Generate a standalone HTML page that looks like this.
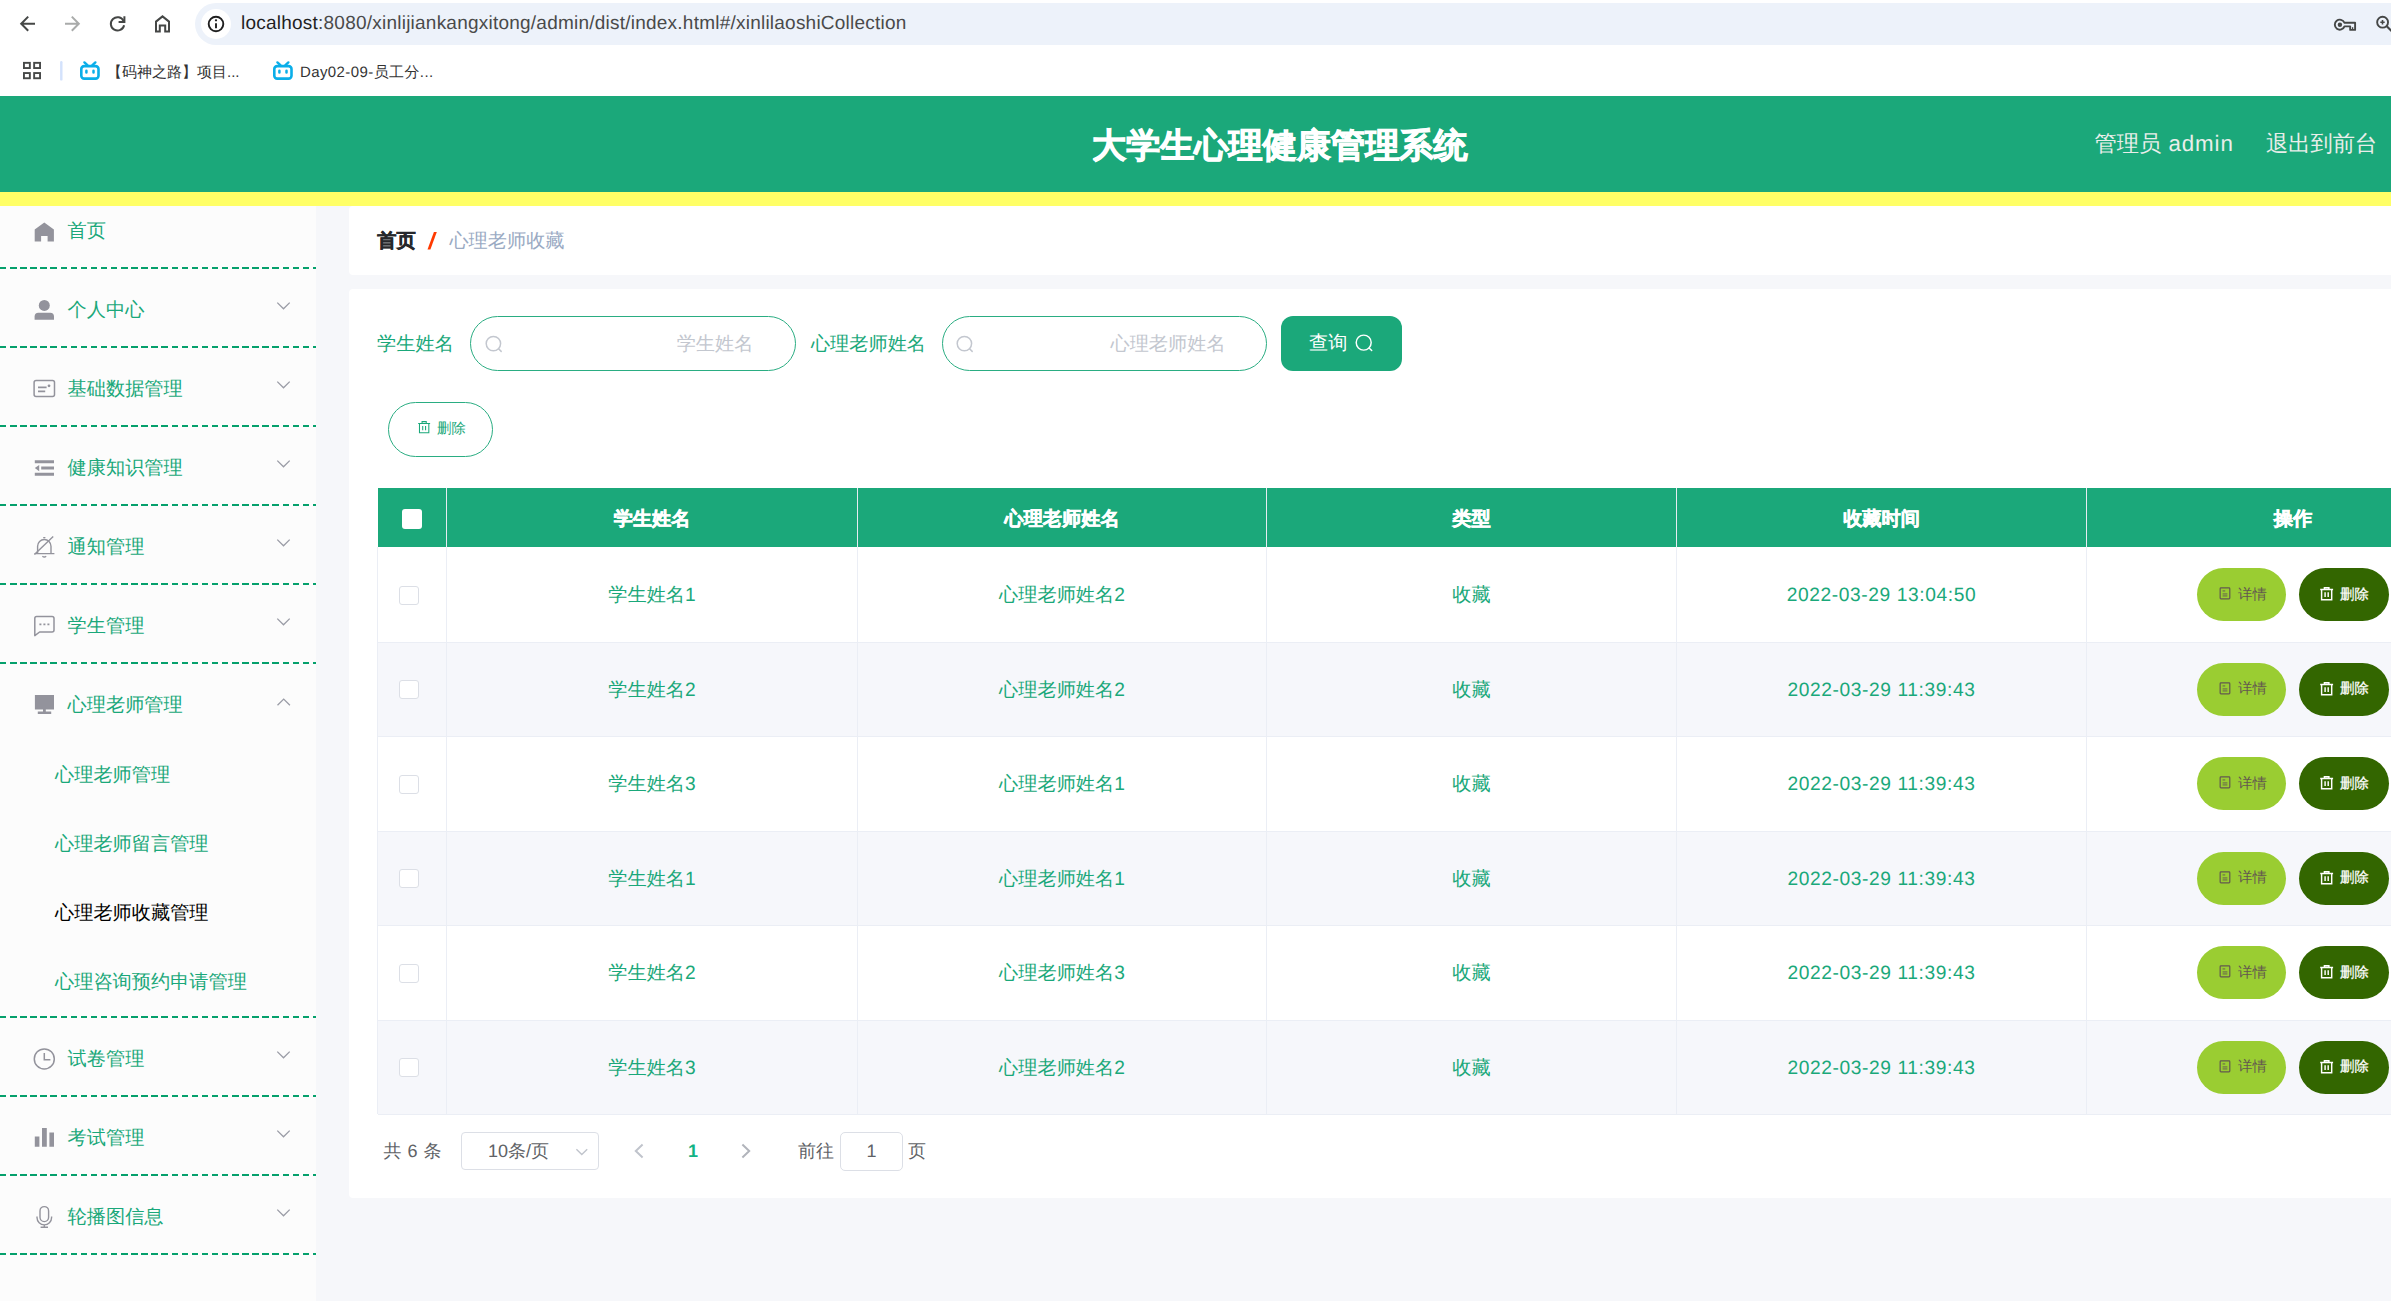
<!DOCTYPE html>
<html lang="zh">
<head>
<meta charset="utf-8">
<title>xinlilaoshiCollection</title>
<style>
*{box-sizing:border-box;margin:0;padding:0}
html,body{width:2391px;height:1301px;overflow:hidden;background:#fff}
body{font-family:"Liberation Sans",sans-serif;position:relative;color:#333;text-rendering:geometricPrecision}
.abs{position:absolute}
.t{position:absolute;white-space:nowrap;line-height:1}
svg{position:absolute;overflow:visible}
#urlbar{left:195px;top:3px;width:2300px;height:42px;border-radius:21px;background:#edf2fa}
#infoc{left:201px;top:9px;width:30px;height:30px;border-radius:15px;background:#fff}
#url{left:241px;top:14px;font-size:19px;color:#4a4a4a;letter-spacing:0.23px}#url b{font-weight:normal;color:#1f1f1f}
.bm{font-size:15px;color:#333;top:65px}
#hdr{left:0;top:96px;width:2391px;height:96px;background:#1ba87a}
#ylw{left:0;top:192px;width:2391px;height:14px;background:#ffff66}
#title{left:1279.8px;transform:translateX(-50%);top:129px;font-size:34.15px;font-weight:bold;color:#fff;-webkit-text-stroke:0.9px #fff}
.hr{font-size:22.3px;color:#e9eeea;top:133px}
#main{left:316px;top:206px;width:2075px;height:1095px;background:#f6f7fa}
#side{left:0;top:206px;width:316px;height:1095px;background:#fcfcfc}
.dash{left:0;width:316px;height:2px;overflow:hidden}.dash i{position:absolute;left:-0.4px;top:0;width:330px;height:2px;background:repeating-linear-gradient(90deg,#05a06c 0,#05a06c 6.5px,transparent 6.5px,transparent 10.09px)}
.mi{font-size:19.2px;color:#1aa87a;left:67.6px}
.si{font-size:19.2px;color:#1aa87a;left:55px}
#bc{left:349px;top:206px;width:2100px;height:69px;background:#fff;border-radius:4px}
#card{left:349px;top:289px;width:2100px;height:909px;background:#fff;border-radius:4px}
.lbl{font-size:19.2px;color:#1aa87a;top:335px}
.inp{top:316px;width:326px;height:55px;border:1.3px solid #2aad82;border-radius:28px;background:#fff}
.ph{font-size:19.2px;color:#c3c7cf;top:334.6px}
#thead{left:378px;top:488px;width:2100px;height:59px;background:#1ba87a}
.th{font-size:19.2px;font-weight:bold;color:#fff;-webkit-text-stroke:0.5px #fff;top:510px;transform:translateX(-50%)}
.vl{top:547px;width:1px;height:568px;background:#ebeef5}
.vh{top:488px;width:1px;height:59px;background:#e6ebf2}
.row{left:378px;width:2100px;border-bottom:1px solid #ebeef5}
.row.s{background:#f6f7fb}
.td{font-size:19.2px;color:#1aa87a;transform:translateX(-50%)}
.cb{left:399.4px;width:19.6px;height:19px;border:1px solid #dcdfe6;border-radius:3px;background:#fff}
.b1{left:2197px;width:89.4px;height:53.4px;border-radius:27px;background:#9acd32}
.b2{left:2298.7px;width:90.6px;height:53.4px;border-radius:27px;background:#336600}
.b1t{font-size:14.4px;color:#63584f;left:2238px}
.b2t{font-size:14.4px;color:#fff;left:2340px;-webkit-text-stroke:0.25px #fff}
.pg{font-size:18px;color:#606266;top:1142px}
</style>
</head>
<body>

<div class="abs" id="urlbar"></div>
<div class="abs" id="infoc"></div>
<div class="t" id="url"><b>localhost</b>:8080/xinlijiankangxitong/admin/dist/index.html#/xinlilaoshiCollection</div>
<!-- nav icons -->
<svg style="left:0;top:0" width="260" height="50" viewBox="0 0 260 50" fill="none" stroke-linecap="butt" stroke-linejoin="miter">
 <path d="M35 23.7 H22 M28.2 16.6 L21.2 23.7 L28.2 30.8" stroke="#454746" stroke-width="2"/>
 <path d="M65 23.7 H78 M71.8 16.6 L78.8 23.7 L71.8 30.8" stroke="#a9abaa" stroke-width="2"/>
 <path d="M123.6 21.0 A6.7 6.7 0 1 0 124.1 25.2" stroke="#454746" stroke-width="2"/>
 <path d="M124.4 16.2 V22 H118.6" stroke="#454746" stroke-width="2"/>
 <path d="M156 31.4 V21.6 L162.5 16.4 L169 21.6 V31.4 H165.2 V25.4 H159.8 V31.4 Z" stroke="#454746" stroke-width="2"/>
 <circle cx="216" cy="24" r="7.3" stroke="#1f1f1f" stroke-width="1.9"/>
 <path d="M216 23.2 V28.2" stroke="#1f1f1f" stroke-width="1.9"/>
 <circle cx="216" cy="20.3" r="1.15" fill="#1f1f1f"/>
</svg>
<!-- key + zoom -->
<svg style="left:2330px;top:10px" width="61" height="30" viewBox="0 0 61 30" fill="none" stroke="#454746" stroke-width="1.9" stroke-linejoin="round">
 <path d="M14.4 12.7 A5 5 0 1 0 14.5 16.4 H20.2 V19.9 H25.1 V12.7 Z"/>
 <circle cx="9.9" cy="14.7" r="2.2" fill="#454746" stroke="none"/>
 <path d="M22.6 17.2 V20" stroke-width="1.3"/>
 <circle cx="52.6" cy="12.2" r="5.45"/>
 <path d="M52.5 9.9 V14.6 M50.3 12.2 H54.7" stroke-width="1.6"/>
 <path d="M56.5 16.1 L62 21.6" stroke-width="2.1"/>
</svg>
<!-- bookmarks bar -->
<svg style="left:20px;top:58px" width="50" height="26" viewBox="0 0 50 26" fill="none">
 <g stroke="#474948" stroke-width="1.9"><rect x="3.95" y="4.85" width="5.9" height="5.2"/><rect x="14.15" y="4.85" width="5.9" height="5.2"/><rect x="3.95" y="15.05" width="5.9" height="5.2"/><rect x="14.15" y="15.05" width="5.9" height="5.2"/></g>
 <path d="M41.3 4.2 V21.4" stroke="#d3e2fc" stroke-width="2.4" stroke-linecap="round"/>
</svg>
<svg style="left:79px;top:60px" width="22" height="22" viewBox="0 0 22 22" fill="none" stroke="#0aaee9" stroke-width="2.6" stroke-linecap="round" stroke-linejoin="round"><rect x="2.3" y="6.1" width="17.2" height="12.5" rx="2.9"/><path d="M5.4 2.4 L8.4 5.2 M16.4 2.4 L13.4 5.2" stroke-width="2.4"/><path d="M7.4 10.8 V12.4 M14.5 10.8 V12.4" stroke-width="2.5"/></svg>
<div class="t bm" style="left:107px">【码神之路】项目...</div>
<svg style="left:272px;top:60px" width="22" height="22" viewBox="0 0 22 22" fill="none" stroke="#0aaee9" stroke-width="2.6" stroke-linecap="round" stroke-linejoin="round"><rect x="2.3" y="6.1" width="17.2" height="12.5" rx="2.9"/><path d="M5.4 2.4 L8.4 5.2 M16.4 2.4 L13.4 5.2" stroke-width="2.4"/><path d="M7.4 10.8 V12.4 M14.5 10.8 V12.4" stroke-width="2.5"/></svg>
<div class="t bm" style="left:300px;letter-spacing:0.4px">Day02-09-员工分...</div>

<div class="abs" id="hdr"></div>
<div class="abs" id="ylw"></div>
<div class="t" id="title">大学生心理健康管理系统</div>
<div class="t hr" style="right:157.3px">管理员&nbsp;<span style="letter-spacing:0.9px;margin-left:1px">admin</span></div>
<div class="t hr" style="right:13.6px">退出到前台</div>
<div class="abs" id="main"></div>
<div class="abs" id="side"></div>
<div class="abs dash" style="top:267px"><i></i></div>
<div class="abs dash" style="top:346px"><i></i></div>
<div class="abs dash" style="top:425px"><i></i></div>
<div class="abs dash" style="top:504px"><i></i></div>
<div class="abs dash" style="top:583px"><i></i></div>
<div class="abs dash" style="top:662px"><i></i></div>
<div class="abs dash" style="top:1016px"><i></i></div>
<div class="abs dash" style="top:1095px"><i></i></div>
<div class="abs dash" style="top:1174px"><i></i></div>
<div class="abs dash" style="top:1253px"><i></i></div>
<svg style="left:32px;top:219px" width="24" height="24" viewBox="0 0 24 24" fill="none"><path d="M12.3 3.4 L21.9 10.4 V22.6 H15.6 V17 H9.1 V22.6 H2.7 V10.4 Z" fill="#93939c"/></svg>
<div class="t mi" style="top:222.2px">首页</div>
<svg style="left:32px;top:298px" width="24" height="24" viewBox="0 0 24 24" fill="none"><circle cx="12.3" cy="7.4" r="5.5" fill="#93939c"/><path d="M2.6 21.8 V18.6 Q2.6 14.8 6.4 14.8 H18.2 Q22 14.8 22 18.6 V21.8 Z" fill="#93939c"/></svg>
<div class="t mi" style="top:301.2px">个人中心</div>
<svg style="left:276px;top:301.4px" width="16" height="10" viewBox="0 0 16 10" fill="none"><path d="M1.3 1.6 L7.5 7.8 L13.7 1.6" stroke="#9a9ca6" stroke-width="1.3"/></svg>
<svg style="left:32px;top:377px" width="24" height="24" viewBox="0 0 24 24" fill="none"><rect x="2.1" y="3.4" width="20.4" height="16.2" rx="2" stroke="#93939c" stroke-width="1.5"/><path d="M6 10.4 H14.6 M6 14.4 H13.2" stroke="#93939c" stroke-width="1.6"/><circle cx="17" cy="8.8" r="1.4" fill="#93939c"/></svg>
<div class="t mi" style="top:380.2px">基础数据管理</div>
<svg style="left:276px;top:380.4px" width="16" height="10" viewBox="0 0 16 10" fill="none"><path d="M1.3 1.6 L7.5 7.8 L13.7 1.6" stroke="#9a9ca6" stroke-width="1.3"/></svg>
<svg style="left:32px;top:456px" width="24" height="24" viewBox="0 0 24 24" fill="none"><path d="M2.8 4.2 H22 V7.2 H2.8 Z M9.2 10.6 H22 V13.6 H9.2 Z M2.8 16.8 H22 V19.8 H2.8 Z M7.2 9 V15.2 L2.8 12.1 Z" fill="#93939c"/></svg>
<div class="t mi" style="top:459.2px">健康知识管理</div>
<svg style="left:276px;top:459.4px" width="16" height="10" viewBox="0 0 16 10" fill="none"><path d="M1.3 1.6 L7.5 7.8 L13.7 1.6" stroke="#9a9ca6" stroke-width="1.3"/></svg>
<svg style="left:32px;top:535px" width="24" height="24" viewBox="0 0 24 24" fill="none"><path d="M5.6 18.6 V11.2 A6.7 6.7 0 0 1 19 11.2 V18.6 M2.6 18.6 H22.4 M10.4 21.2 Q12.3 22.8 14.2 21.2 M11.2 2.6 H13.4" stroke="#93939c" stroke-width="1.4"/><path d="M2.4 19.6 L21.2 1.6" stroke="#93939c" stroke-width="1.4"/></svg>
<div class="t mi" style="top:538.2px">通知管理</div>
<svg style="left:276px;top:538.4px" width="16" height="10" viewBox="0 0 16 10" fill="none"><path d="M1.3 1.6 L7.5 7.8 L13.7 1.6" stroke="#9a9ca6" stroke-width="1.3"/></svg>
<svg style="left:32px;top:614px" width="24" height="24" viewBox="0 0 24 24" fill="none"><path d="M4.6 2.6 H20 Q22 2.6 22 4.6 V16 Q22 18 20 18 H7.6 L2.8 21.6 V4.4 Q2.8 2.6 4.6 2.6 Z" stroke="#93939c" stroke-width="1.5" stroke-linejoin="round"/><path d="M7.4 10.3 H9.4 M11.4 10.3 H13.4 M15.4 10.3 H17.4" stroke="#93939c" stroke-width="1.7"/></svg>
<div class="t mi" style="top:617.2px">学生管理</div>
<svg style="left:276px;top:617.4px" width="16" height="10" viewBox="0 0 16 10" fill="none"><path d="M1.3 1.6 L7.5 7.8 L13.7 1.6" stroke="#9a9ca6" stroke-width="1.3"/></svg>
<svg style="left:32px;top:693px" width="24" height="24" viewBox="0 0 24 24" fill="none"><path d="M2.9 1.9 H22 V16.6 H2.9 Z M11 16.6 H13.8 V18.6 H19.2 V20.9 H5.8 V18.6 H11 Z" fill="#93939c"/></svg>
<div class="t mi" style="top:696.2px">心理老师管理</div>
<svg style="left:276px;top:696.4px" width="16" height="10" viewBox="0 0 16 10" fill="none"><path d="M1.5 9.2 L7.7 3.1 L13.9 9.2" stroke="#9a9ca6" stroke-width="1.3"/></svg>
<svg style="left:32px;top:1047px" width="24" height="24" viewBox="0 0 24 24" fill="none"><circle cx="12.3" cy="11.9" r="10.0" stroke="#93939c" stroke-width="1.5"/><path d="M12.3 6 V12.8 H18.4" stroke="#93939c" stroke-width="1.5"/></svg>
<div class="t mi" style="top:1050.2px">试卷管理</div>
<svg style="left:276px;top:1050.4px" width="16" height="10" viewBox="0 0 16 10" fill="none"><path d="M1.3 1.6 L7.5 7.8 L13.7 1.6" stroke="#9a9ca6" stroke-width="1.3"/></svg>
<svg style="left:32px;top:1126px" width="24" height="24" viewBox="0 0 24 24" fill="none"><path d="M2.8 10.4 H7.4 V20.8 H2.8 Z M10 2 H14.8 V20.8 H10 Z M17.4 6.6 H22 V20.8 H17.4 Z" fill="#93939c"/></svg>
<div class="t mi" style="top:1129.2px">考试管理</div>
<svg style="left:276px;top:1129.4px" width="16" height="10" viewBox="0 0 16 10" fill="none"><path d="M1.3 1.6 L7.5 7.8 L13.7 1.6" stroke="#9a9ca6" stroke-width="1.3"/></svg>
<svg style="left:32px;top:1205px" width="24" height="24" viewBox="0 0 24 24" fill="none"><rect x="8" y="1.6" width="8.6" height="15" rx="4.3" stroke="#93939c" stroke-width="1.4"/><path d="M5 11.4 V12.6 A7.3 7.3 0 0 0 19.6 12.6 V11.4 M12.3 19.9 V22 M8.6 22.3 H16" stroke="#93939c" stroke-width="1.4"/></svg>
<div class="t mi" style="top:1208.2px">轮播图信息</div>
<svg style="left:276px;top:1208.4px" width="16" height="10" viewBox="0 0 16 10" fill="none"><path d="M1.3 1.6 L7.5 7.8 L13.7 1.6" stroke="#9a9ca6" stroke-width="1.3"/></svg>
<div class="t si" style="top:766.2px">心理老师管理</div>
<div class="t si" style="top:835.2px">心理老师留言管理</div>
<div class="t si" style="top:904.2px;color:#000">心理老师收藏管理</div>
<div class="t si" style="top:973.2px">心理咨询预约申请管理</div>
<div class="abs" id="bc"></div>
<div class="t" style="left:377.2px;top:232px;font-size:19.3px;font-weight:bold;color:#26282c;-webkit-text-stroke:0.4px #26282c">首页</div>
<svg style="left:425px;top:230px" width="14" height="22" viewBox="0 0 14 22"><path d="M2.5 19.6 H5.4 L11.8 2 H8.9 Z" fill="#ff3a00"/></svg>
<div class="t" style="left:449.4px;top:232px;font-size:19.2px;color:#9aaac3">心理老师收藏</div>
<div class="abs" id="card"></div>
<div class="t lbl" style="right:1937.2px">学生姓名</div>
<div class="abs inp" style="left:470px"></div>
<svg style="left:485px;top:333.5px" width="20" height="20" viewBox="0 0 20 20" fill="none" stroke="#c3c7cf" stroke-width="1.5" stroke-linecap="round"><circle cx="8.4" cy="9.6" r="7.2"/><path d="M13.584 14.783999999999999 L16.184 17.384"/></svg>
<div class="t ph" style="right:1637.6px">学生姓名</div>
<div class="t lbl" style="right:1465px">心理老师姓名</div>
<div class="abs inp" style="left:942px;width:325px"></div>
<svg style="left:956px;top:333.5px" width="20" height="20" viewBox="0 0 20 20" fill="none" stroke="#c3c7cf" stroke-width="1.5" stroke-linecap="round"><circle cx="8.4" cy="9.6" r="7.2"/><path d="M13.584 14.783999999999999 L16.184 17.384"/></svg>
<div class="t ph" style="right:1165.4px">心理老师姓名</div>
<div class="abs" style="left:1281px;top:316px;width:121px;height:55px;border-radius:12px;background:#1ba87a"></div>
<div class="t" style="left:1309px;top:334px;font-size:19.2px;color:#fff">查询</div>
<svg style="left:1354.6px;top:332.6px" width="20" height="20" viewBox="0 0 20 20" fill="none" stroke="#fff" stroke-width="1.45" stroke-linecap="round"><circle cx="8.7" cy="9.6" r="7.5"/><path d="M14.099999999999998 15.0 L16.7 17.6"/></svg>
<div class="abs" style="left:388px;top:402px;width:105px;height:55px;border-radius:28px;border:1.3px solid #2aad82;background:#fff"></div>
<svg style="left:417.6px;top:420.9px" width="12.30" height="12.21" viewBox="0 0 13.3 13.2" fill="none" stroke="#1aa87a" stroke-width="1.14"><path d="M0.2 2.6 H13.1 M4.4 2.5 V0.7 H8.9 V2.5 M1.6 2.8 V12.7 H11.7 V2.8 M5.1 5.3 V9.9 M8.2 5.3 V9.9"/></svg>
<div class="t" style="left:437px;top:422.4px;font-size:14.4px;color:#1aa87a">删除</div>
<div class="abs" id="thead"></div>
<div class="abs" style="left:402px;top:509px;width:19.5px;height:19.5px;border-radius:3px;background:#fff"></div>
<div class="abs vh" style="left:446px"></div>
<div class="abs vh" style="left:857px"></div>
<div class="abs vh" style="left:1266px"></div>
<div class="abs vh" style="left:1676px"></div>
<div class="abs vh" style="left:2086px"></div>
<div class="t th" style="left:652px">学生姓名</div>
<div class="t th" style="left:1062px">心理老师姓名</div>
<div class="t th" style="left:1471.5px">类型</div>
<div class="t th" style="left:1881.5px">收藏时间</div>
<div class="t th" style="left:2293px">操作</div>
<div class="abs row" style="top:548.0px;height:94.5px"></div>
<div class="abs cb" style="top:585.85px"></div>
<div class="t td" style="left:652px;top:586.05px">学生姓名1</div>
<div class="t td" style="left:1062px;top:586.05px">心理老师姓名2</div>
<div class="t td" style="left:1471.5px;top:586.05px">收藏</div>
<div class="t td" style="left:1881.5px;top:586.05px;letter-spacing:0.6px">2022-03-29 13:04:50</div>
<div class="abs b1" style="top:568.0px"></div>
<svg style="left:2218.5px;top:587.45px" width="12" height="13" viewBox="0 0 12 13" fill="none" stroke="#63584f" stroke-width="1.2"><rect x="1.15" y="0.85" width="9.65" height="11" rx="0.8"/><path d="M3.6 3.95 H6.2 M3.6 6.95 H8.4 M3.6 8.95 H8.4" stroke-width="0.95"/></svg>
<div class="t b1t" style="top:587.85px">详情</div>
<div class="abs b2" style="top:568.0px"></div>
<svg style="left:2320.3px;top:587.05px" width="13.30" height="13.20" viewBox="0 0 13.3 13.2" fill="none" stroke="#fff" stroke-width="1.45"><path d="M0.2 2.6 H13.1 M4.4 2.5 V0.7 H8.9 V2.5 M1.6 2.8 V12.7 H11.7 V2.8 M5.1 5.3 V9.9 M8.2 5.3 V9.9"/></svg>
<div class="t b2t" style="top:587.85px">删除</div>
<div class="abs row s" style="top:642.5px;height:94.5px"></div>
<div class="abs cb" style="top:680.35px"></div>
<div class="t td" style="left:652px;top:680.55px">学生姓名2</div>
<div class="t td" style="left:1062px;top:680.55px">心理老师姓名2</div>
<div class="t td" style="left:1471.5px;top:680.55px">收藏</div>
<div class="t td" style="left:1881.5px;top:680.55px;letter-spacing:0.6px">2022-03-29 11:39:43</div>
<div class="abs b1" style="top:662.5px"></div>
<svg style="left:2218.5px;top:681.95px" width="12" height="13" viewBox="0 0 12 13" fill="none" stroke="#63584f" stroke-width="1.2"><rect x="1.15" y="0.85" width="9.65" height="11" rx="0.8"/><path d="M3.6 3.95 H6.2 M3.6 6.95 H8.4 M3.6 8.95 H8.4" stroke-width="0.95"/></svg>
<div class="t b1t" style="top:682.35px">详情</div>
<div class="abs b2" style="top:662.5px"></div>
<svg style="left:2320.3px;top:681.55px" width="13.30" height="13.20" viewBox="0 0 13.3 13.2" fill="none" stroke="#fff" stroke-width="1.45"><path d="M0.2 2.6 H13.1 M4.4 2.5 V0.7 H8.9 V2.5 M1.6 2.8 V12.7 H11.7 V2.8 M5.1 5.3 V9.9 M8.2 5.3 V9.9"/></svg>
<div class="t b2t" style="top:682.35px">删除</div>
<div class="abs row" style="top:737.0px;height:94.5px"></div>
<div class="abs cb" style="top:774.85px"></div>
<div class="t td" style="left:652px;top:775.05px">学生姓名3</div>
<div class="t td" style="left:1062px;top:775.05px">心理老师姓名1</div>
<div class="t td" style="left:1471.5px;top:775.05px">收藏</div>
<div class="t td" style="left:1881.5px;top:775.05px;letter-spacing:0.6px">2022-03-29 11:39:43</div>
<div class="abs b1" style="top:757.0px"></div>
<svg style="left:2218.5px;top:776.45px" width="12" height="13" viewBox="0 0 12 13" fill="none" stroke="#63584f" stroke-width="1.2"><rect x="1.15" y="0.85" width="9.65" height="11" rx="0.8"/><path d="M3.6 3.95 H6.2 M3.6 6.95 H8.4 M3.6 8.95 H8.4" stroke-width="0.95"/></svg>
<div class="t b1t" style="top:776.85px">详情</div>
<div class="abs b2" style="top:757.0px"></div>
<svg style="left:2320.3px;top:776.05px" width="13.30" height="13.20" viewBox="0 0 13.3 13.2" fill="none" stroke="#fff" stroke-width="1.45"><path d="M0.2 2.6 H13.1 M4.4 2.5 V0.7 H8.9 V2.5 M1.6 2.8 V12.7 H11.7 V2.8 M5.1 5.3 V9.9 M8.2 5.3 V9.9"/></svg>
<div class="t b2t" style="top:776.85px">删除</div>
<div class="abs row s" style="top:831.5px;height:94.5px"></div>
<div class="abs cb" style="top:869.35px"></div>
<div class="t td" style="left:652px;top:869.55px">学生姓名1</div>
<div class="t td" style="left:1062px;top:869.55px">心理老师姓名1</div>
<div class="t td" style="left:1471.5px;top:869.55px">收藏</div>
<div class="t td" style="left:1881.5px;top:869.55px;letter-spacing:0.6px">2022-03-29 11:39:43</div>
<div class="abs b1" style="top:851.5px"></div>
<svg style="left:2218.5px;top:870.95px" width="12" height="13" viewBox="0 0 12 13" fill="none" stroke="#63584f" stroke-width="1.2"><rect x="1.15" y="0.85" width="9.65" height="11" rx="0.8"/><path d="M3.6 3.95 H6.2 M3.6 6.95 H8.4 M3.6 8.95 H8.4" stroke-width="0.95"/></svg>
<div class="t b1t" style="top:871.35px">详情</div>
<div class="abs b2" style="top:851.5px"></div>
<svg style="left:2320.3px;top:870.55px" width="13.30" height="13.20" viewBox="0 0 13.3 13.2" fill="none" stroke="#fff" stroke-width="1.45"><path d="M0.2 2.6 H13.1 M4.4 2.5 V0.7 H8.9 V2.5 M1.6 2.8 V12.7 H11.7 V2.8 M5.1 5.3 V9.9 M8.2 5.3 V9.9"/></svg>
<div class="t b2t" style="top:871.35px">删除</div>
<div class="abs row" style="top:926.0px;height:94.5px"></div>
<div class="abs cb" style="top:963.85px"></div>
<div class="t td" style="left:652px;top:964.05px">学生姓名2</div>
<div class="t td" style="left:1062px;top:964.05px">心理老师姓名3</div>
<div class="t td" style="left:1471.5px;top:964.05px">收藏</div>
<div class="t td" style="left:1881.5px;top:964.05px;letter-spacing:0.6px">2022-03-29 11:39:43</div>
<div class="abs b1" style="top:946.0px"></div>
<svg style="left:2218.5px;top:965.45px" width="12" height="13" viewBox="0 0 12 13" fill="none" stroke="#63584f" stroke-width="1.2"><rect x="1.15" y="0.85" width="9.65" height="11" rx="0.8"/><path d="M3.6 3.95 H6.2 M3.6 6.95 H8.4 M3.6 8.95 H8.4" stroke-width="0.95"/></svg>
<div class="t b1t" style="top:965.85px">详情</div>
<div class="abs b2" style="top:946.0px"></div>
<svg style="left:2320.3px;top:965.05px" width="13.30" height="13.20" viewBox="0 0 13.3 13.2" fill="none" stroke="#fff" stroke-width="1.45"><path d="M0.2 2.6 H13.1 M4.4 2.5 V0.7 H8.9 V2.5 M1.6 2.8 V12.7 H11.7 V2.8 M5.1 5.3 V9.9 M8.2 5.3 V9.9"/></svg>
<div class="t b2t" style="top:965.85px">删除</div>
<div class="abs row s" style="top:1020.5px;height:94.5px"></div>
<div class="abs cb" style="top:1058.35px"></div>
<div class="t td" style="left:652px;top:1058.55px">学生姓名3</div>
<div class="t td" style="left:1062px;top:1058.55px">心理老师姓名2</div>
<div class="t td" style="left:1471.5px;top:1058.55px">收藏</div>
<div class="t td" style="left:1881.5px;top:1058.55px;letter-spacing:0.6px">2022-03-29 11:39:43</div>
<div class="abs b1" style="top:1040.5px"></div>
<svg style="left:2218.5px;top:1059.95px" width="12" height="13" viewBox="0 0 12 13" fill="none" stroke="#63584f" stroke-width="1.2"><rect x="1.15" y="0.85" width="9.65" height="11" rx="0.8"/><path d="M3.6 3.95 H6.2 M3.6 6.95 H8.4 M3.6 8.95 H8.4" stroke-width="0.95"/></svg>
<div class="t b1t" style="top:1060.35px">详情</div>
<div class="abs b2" style="top:1040.5px"></div>
<svg style="left:2320.3px;top:1059.55px" width="13.30" height="13.20" viewBox="0 0 13.3 13.2" fill="none" stroke="#fff" stroke-width="1.45"><path d="M0.2 2.6 H13.1 M4.4 2.5 V0.7 H8.9 V2.5 M1.6 2.8 V12.7 H11.7 V2.8 M5.1 5.3 V9.9 M8.2 5.3 V9.9"/></svg>
<div class="t b2t" style="top:1060.35px">删除</div>
<div class="abs" style="left:377px;top:547px;width:1px;height:567px;background:#ebeef5"></div>
<div class="abs vl" style="left:446px"></div>
<div class="abs vl" style="left:857px"></div>
<div class="abs vl" style="left:1266px"></div>
<div class="abs vl" style="left:1676px"></div>
<div class="abs vl" style="left:2086px"></div>
<div class="t pg" style="left:383.5px;word-spacing:1px">共 6 条</div>
<div class="abs" style="left:461px;top:1132px;width:138px;height:38px;border:1px solid #dcdfe6;border-radius:4px;background:#fff"></div>
<div class="t pg" style="left:488px">10条/页</div>
<svg style="left:575px;top:1148px" width="14" height="9" viewBox="0 0 14 9" fill="none"><path d="M1.4 1.2 L6.8 6.6 L12.2 1.2" stroke="#c0c4cc" stroke-width="1.4"/></svg>
<svg style="left:633px;top:1143px" width="12" height="16" viewBox="0 0 12 16" fill="none"><path d="M9.6 1.6 L2.8 8 L9.6 14.4" stroke="#c0c4cc" stroke-width="2"/></svg>
<div class="t pg" style="left:688px;font-weight:bold;color:#13b384">1</div>
<svg style="left:740px;top:1143px" width="12" height="16" viewBox="0 0 12 16" fill="none"><path d="M2.4 1.6 L9.2 8 L2.4 14.4" stroke="#b1b4bb" stroke-width="2"/></svg>
<div class="t pg" style="left:798px">前往</div>
<div class="abs" style="left:840px;top:1132px;width:63px;height:39px;border:1px solid #dcdfe6;border-radius:5px;background:#fff"></div>
<div class="t pg" style="left:866.5px">1</div>
<div class="t pg" style="left:908px">页</div>
</body>
</html>
